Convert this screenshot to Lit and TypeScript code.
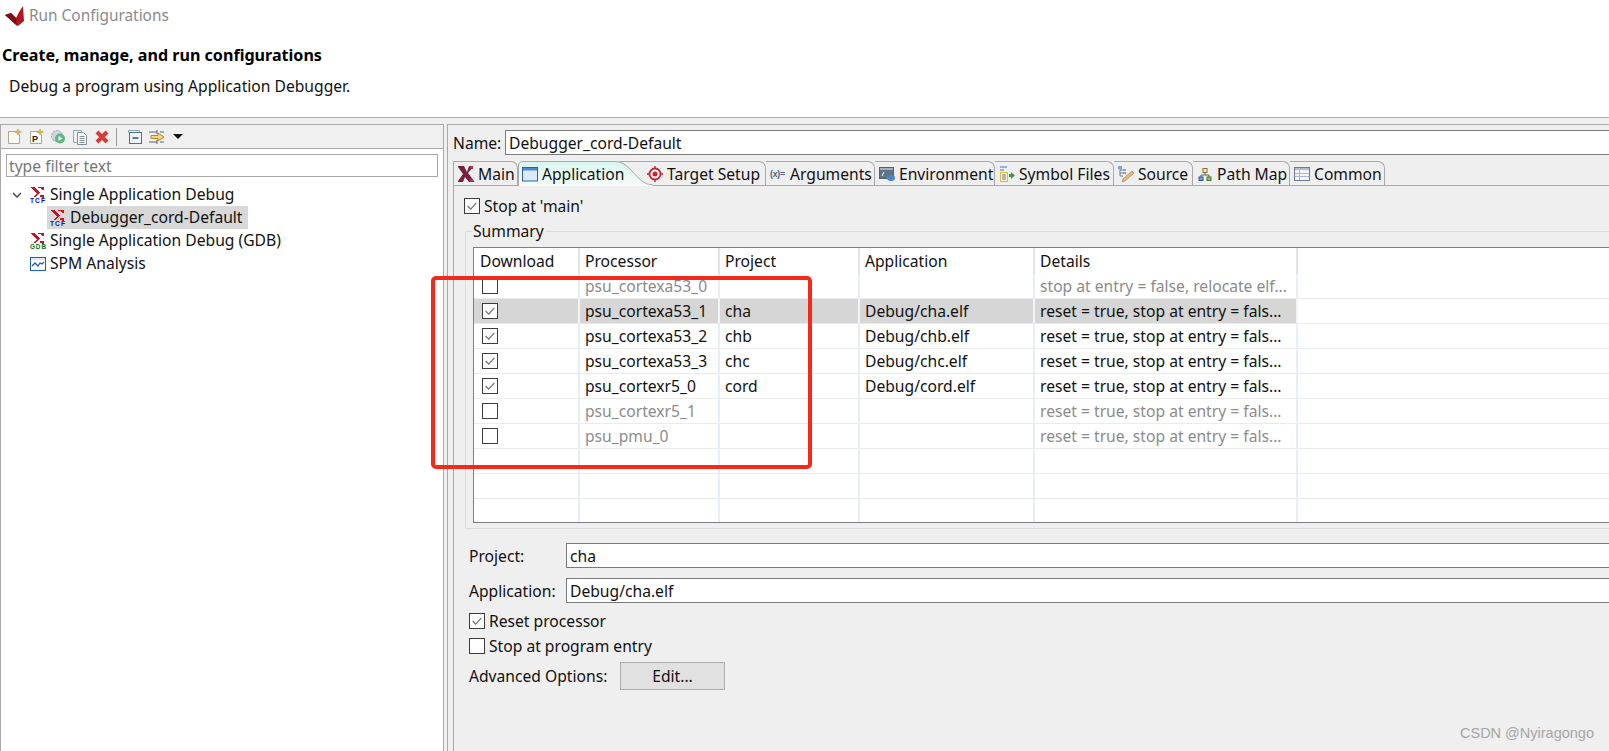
import { LitElement, html, css, svg } from "lit";
import { customElement } from "lit/decorators.js";

const sigma = (c = "#c8141e") => svg`
  <path d="M1 0h4v1h1v1h1v1h1v1h1v1h1v1H9v1H8v1H7v1H6v1H4v-1h1V8h1V7h1V6H6V5H5V4H4V3H3V2H2V1H1z" fill="${c}"/>
  <path d="M8 0h6v3h-2V2h-1V1H8zM10 8h4v3h-2v-1h-2z" fill="${c}"/>`;

const tcf = svg`<svg class="ic" viewBox="0 0 16 16">
  <g>${sigma()}</g>
  <text x="0" y="16" font-family="Liberation Sans" font-weight="700" font-size="6.6" fill="#0a0ad8" textLength="15">TCF</text></svg>`;
const gdb = svg`<svg class="ic" viewBox="0 0 16 16">
  <g>${sigma()}</g>
  <text x="0" y="16" font-family="Liberation Sans" font-weight="700" font-size="6.4" fill="#0b6b14" textLength="16">GDB</text></svg>`;
const spm = svg`<svg class="ic" viewBox="0 0 16 16">
  <rect x=".5" y="1.5" width="15" height="13" fill="#fff" stroke="#1a5fb4"/>
  <rect x="1" y="2" width="14" height="2" fill="#dce8f6"/>
  <path d="M2 10l3-3 3 3 2-3 2 1 2-2" fill="none" stroke="#1a5fb4" stroke-width="1.3"/></svg>`;
const page = svg`<path d="M2.5 2.5h7l4 3v9h-11z" fill="#fbfbf4" stroke="#a9a99a"/>`;
const spark = svg`<path d="M12 0l1 2.2 2.5.8-2.5.8-1 2.2-1-2.2L8.5 3l2.5-.8z" fill="#e6b94a" stroke="#a9812a" stroke-width=".4"/>`;

const toolIcons = [
  svg`<svg class="ic" viewBox="0 0 16 16">${page}${spark}</svg>`,
  svg`<svg class="ic" viewBox="0 0 16 16">${page}${spark}<text x="4" y="13" font-family="Liberation Sans" font-weight="700" font-size="9" fill="#222">P</text></svg>`,
  svg`<svg class="ic" viewBox="0 0 16 16"><circle cx="7" cy="7" r="5.5" fill="#cfd6dc" stroke="#9aa5ae" stroke-dasharray="2 1"/><circle cx="10" cy="9.5" r="5" fill="#5cb67e"/><path d="M8.5 7l4 2.5-4 2.5z" fill="#fff"/></svg>`,
  svg`<svg class="ic" viewBox="0 0 16 16"><path d="M1.5 1.5h8v12h-8z" fill="#eef1f5" stroke="#9aa5b5"/><path d="M5.5 3.5h6l3 3v9h-9z" fill="#fff" stroke="#7f8ea3"/><path d="M7.5 7.5h5M7.5 9.5h5M7.5 11.5h5M7.5 13.5h5" stroke="#7f8ea3"/></svg>`,
  svg`<svg class="ic" viewBox="0 0 16 16"><path d="M3 3l10 10M13 3L3 13" stroke="#d93a3a" stroke-width="4"/></svg>`,
];
const toolIcons2 = [
  svg`<svg class="ic" viewBox="0 0 16 16"><path d="M1.5 3.500v-2h11v2" fill="none" stroke="#8ea4bd"/><rect x="2.500" y="3.500" width="12" height="11" fill="#eef4fb" stroke="#4d6f96"/><path d="M5.500 9h6" stroke="#1d3f66" stroke-width="1.400"/></svg>`,
  svg`<svg class="ic" viewBox="0 0 16 16"><path d="M0 3h8M0 13h8M8 1v4M8 11v4" stroke="#5a6470"/><path d="M11 3h4M11 13h4" stroke="#5a6470"/><path d="M2 6.500h7V4l6 4-6 4V9.500H2z" fill="#f3d68a" stroke="#b8862a"/></svg>`,
];

const tabIcons: Record<string, unknown> = {
  Main: svg`<svg class="ic" viewBox="0 0 16 16"><path d="M0 0h6l3 6 2-6h4v1l-5 6 6 8v1h-5l-4-5-2 5H0v-1l5-7-5-7z" fill="#7a1f3d"/><path d="M11 0h4v3h-2zM11 13h4v3h-3z" fill="#a8324f"/></svg>`,
  Application: svg`<svg class="ic" viewBox="0 0 16 16"><rect x=".5" y="1.500" width="15" height="13.500" fill="#dbe9f8" stroke="#2a62a8"/><rect x="1" y="2" width="14" height="2.500" fill="#4d8ad0"/></svg>`,
  "Target Setup": svg`<svg class="ic" viewBox="0 0 16 16"><circle cx="8" cy="8" r="5.500" fill="#fff" stroke="#d01f2e" stroke-width="1.800"/><circle cx="8" cy="8" r="2.500" fill="#d01f2e"/><path d="M8 0v3M8 13v3M0 8h3M13 8h3" stroke="#d01f2e" stroke-width="1.400"/></svg>`,
  Arguments: svg`<svg class="ic" viewBox="0 0 16 16"><text x="0" y="11" font-family="Liberation Sans" font-weight="700" font-size="8.500" fill="#4a5f85" textLength="15">(x)=</text></svg>`,
  Environment: svg`<svg class="ic" viewBox="0 0 16 16"><rect x=".5" y="1.500" width="14" height="11" fill="#5e7386" stroke="#52606e"/><rect x="1" y="2" width="13" height="2" fill="#9fb0c0"/><path d="M3 10l2-4" stroke="#fff"/><ellipse cx="12" cy="12" rx="4" ry="3" fill="#4d86c6"/></svg>`,
  "Symbol Files": svg`<svg class="ic" viewBox="0 0 16 16"><path d="M1 1h7M1 4h4" stroke="#2f7fc0"/><rect x="1.500" y="6.500" width="7" height="9" fill="#fdf6c8" stroke="#e0b93a"/><path d="M3 9h4M3 11h4M3 13h4" stroke="#5a78b0"/><path d="M10 8h2V6l4 3.500-4 3.500v-2h-2z" fill="#3a9a4a"/></svg>`,
  Source: svg`<svg class="ic" viewBox="0 0 16 16"><path d="M2 1v9M2 4h3M2 7h3M2 10h3" stroke="#6a7f9a"/><rect x="0" y="0" width="4" height="3" fill="#8aa2bf"/><rect x="5" y="3" width="3" height="2" fill="#8aa2bf"/><rect x="5" y="6" width="3" height="2" fill="#8aa2bf"/><path d="M14 5l2 2-9 8-3 1 1-3z" fill="#e8b878" stroke="#a8763a" stroke-width=".600"/></svg>`,
  "Path Map": svg`<svg class="ic" viewBox="0 0 16 16"><rect x="6" y="2.500" width="4" height="4" fill="#f4e9c4" stroke="#8a6a30"/><path d="M8 7v2M4 11V9h8v2" fill="none" stroke="#5a6470"/><rect x="2" y="11" width="4" height="3.500" fill="#7ea0cc" stroke="#35598c"/><rect x="10" y="11" width="4" height="3.500" fill="#8cc06a" stroke="#4a7a30"/></svg>`,
  Common: svg`<svg class="ic" viewBox="0 0 16 16"><rect x=".5" y="1.500" width="15" height="13" fill="#f2f3f7" stroke="#6f7a94"/><rect x="1" y="2" width="14" height="2" fill="#aeb8cf"/><path d="M5.500 4v10M1 7.500h14M1 10.500h14" stroke="#aeb8cf"/></svg>`,
};

const tabs = [
  { n: "Main", w: 64 },
  { n: "Application", w: 135, sel: true },
  { n: "Target Setup", w: 148, pull: true },
  { n: "Arguments", w: 109 },
  { n: "Environment", w: 120 },
  { n: "Symbol Files", w: 119 },
  { n: "Source", w: 79 },
  { n: "Path Map", w: 97 },
  { n: "Common", w: 95 },
];

const R = "reset = true, stop at entry = fals...";
const rows = [
  { on: false, p: "psu_cortexa53_0", d: "stop at entry = false, relocate elf...", dim: true },
  { on: true, p: "psu_cortexa53_1", pr: "cha", a: "Debug/cha.elf", d: R, sel: true },
  { on: true, p: "psu_cortexa53_2", pr: "chb", a: "Debug/chb.elf", d: R },
  { on: true, p: "psu_cortexa53_3", pr: "chc", a: "Debug/chc.elf", d: R },
  { on: true, p: "psu_cortexr5_0", pr: "cord", a: "Debug/cord.elf", d: R },
  { on: false, p: "psu_cortexr5_1", d: R, dim: true },
  { on: false, p: "psu_pmu_0", d: R, dim: true },
];

const box = (on: boolean) => html`<span class="box">${on
  ? svg`<svg viewBox="0 0 16 16" width="14" height="14"><path d="M3 8l3.500 3.500L13 4.500" fill="none" stroke="#6e6e6e" stroke-width="1.300"/></svg>`
  : ""}</span>`;

@customElement("app-root")
export class AppRoot extends LitElement {
  static styles = css`
    :host {
      display: block; position: relative; width: 1609px; height: 751px; overflow: hidden;
      background: #efefef; color: #111;
      font-family: "Noto Sans", "Liberation Sans", sans-serif; font-size: 15.65px;
    }
    .ic { width: 16px; height: 16px; flex: none; display: block; }
    .header { height: 117px; background: #fff; border-bottom: 1px solid #a9a9a9; box-sizing: content-box; }
    .title { display: flex; align-items: center; height: 31px; padding-left: 4px; gap: 4px; color: #8a8a8a; font-size: 15.4px; }
    .title svg { width: 21px; height: 22px; }
    .heading { font-weight: 700; font-size: 16.1px; margin: 9px 0 0 2px; line-height: 31px; color: #000; }
    .sub { margin: 0 0 0 9px; line-height: 30px; }
    .body { display: flex; height: 633px; padding-top: 6px; box-sizing: border-box; }
    .left { width: 444px; flex: none; box-sizing: border-box; border: 1px solid #a9a9a9; border-bottom: 0; background: #fff; }
    .toolbar { display: flex; align-items: center; gap: 6px; height: 23px; padding-left: 5px; background: #f0f0f0; border-bottom: 1px solid #a9a9a9; }
    .sep { width: 1px; height: 18px; background: #999; margin: 0 4px 0 0; }
    .drop { width: 0; height: 0; border: 5px solid transparent; border-top: 5px solid #111; border-bottom: 0; margin-left: 2px; }
    .filter { margin: 5px 5px 0 5px; height: 23px; box-sizing: border-box; border: 1px solid #a9a9a9; padding-left: 2px; line-height: 22px; color: #777; }
    .tree { margin-top: 6px; }
    .node { display: flex; align-items: center; height: 23px; gap: 4px; }
    .node.l1 { padding-left: 29px; }
    .node.l2 { padding-left: 49px; }
    .node .label { line-height: 23px; }
    .node.sel { background: linear-gradient(#d8d8d8, #d8d8d8) 46px 0 / 201px 100% no-repeat; }
    .node.l1.open { padding-left: 11px; }
    .chevron { width: 10px; height: 6px; margin-right: 4px; flex: none; }
    .right { flex: 1; min-width: 0; margin-left: 3px; border-left: 1px solid #a9a9a9; border-top: 1px solid #a9a9a9; padding-top: 5px; }
    .namerow { display: flex; align-items: center; gap: 5px; padding-left: 5px; height: 25px; }
    .namerow > span { width: 47px; flex: none; line-height: 26px; }
    .field { box-sizing: border-box; height: 25px; background: #fff; border: 1px solid #7a7a7a; border-right: 0; flex: 1; padding-left: 3px; line-height: 25px; }
    .folder { margin: 6px 0 0 5px; border-left: 1px solid #a9a9a9; height: 590px; }
    .tabs { display: flex; height: 24px; border-bottom: 1px solid #a9a9a9; box-sizing: content-box; }
    .tab { box-sizing: border-box; height: 24px; display: flex; align-items: center; gap: 4px; padding-left: 4px; flex: none; position: relative; border-top: 1px solid #a9a9a9; border-right: 1px solid #a9a9a9; border-top-right-radius: 7px; white-space: nowrap; line-height: 24px; }
    .tab.sel { border: 0; height: 25px; z-index: 1; padding-left: 4px; gap: 4px; }
    .tab.sel > svg.shape { position: absolute; left: 0; top: 0; width: 135px; height: 25px; }
    .tab.sel > .ic, .tab.sel > span { position: relative; }
    .tab.pull { margin-left: -35px; padding-left: 29px; }
    .panel { padding: 12px 0 0 10px; }
    .check { display: flex; align-items: center; gap: 4px; height: 16px; }
    .box { box-sizing: border-box; width: 16px; height: 16px; flex: none; background: #fff; border: 1px solid #3c3c3c; display: flex; align-items: center; justify-content: center; }
    .group { position: relative; margin: 17px 0 0 1px; height: 298px; border: 1px solid #dcdcdc; border-right: 0; box-sizing: border-box; padding: 15px 0 0 7px; }
    .legend { position: absolute; left: 6px; top: -10px; background: #efefef; padding: 0 1px; line-height: 18px; }
    .table { height: 276px; box-sizing: border-box; border: 1px solid #7f7f7f; border-right: 0; background: #fff; overflow: hidden; }
    .tr { display: grid; grid-template-columns: 106px 140px 140px 175px 263px 1fr; height: 25px; box-sizing: border-box; border-bottom: 1px solid #ebebeb; line-height: 24px; }
    .tr.head { border-bottom: 0; height: 26px; line-height: 26px; }
    .tr > div { border-right: 2px solid #e8eef7; padding-left: 5px; white-space: nowrap; overflow: hidden; }
    .tr.head > div { border-right-color: #e4e4e4; padding-left: 5px; }
    .tr > div:first-child { padding-left: 8px; display: flex; align-items: center; }
    .tr.head > div:first-child { padding-left: 6px; }
    .tr > div:last-child { border-right: 0; }
    .tr.sel > div { background: #d6d6d6; border-right-color: #f4f4f4; }
    .tr.sel > div:nth-child(n+6) { background: transparent; }
    .dim { color: #8c8c8c; }
    .form { padding: 14px 0 0 5px; }
    .frow { display: flex; align-items: center; height: 25px; }
    .frow + .frow { margin-top: 10px; }
    .frow > label { width: 97px; flex: none; line-height: 26px; }
    .form .check { margin-top: 10px; height: 16px; }
    .form .check + .check { margin-top: 9px; }
    .adv { display: flex; align-items: center; margin-top: 8px; }
    .adv label { width: 151px; flex: none; }
    .btn { width: 105px; height: 28px; box-sizing: border-box; background: #e1e1e1; border: 1px solid #adadad; display: flex; align-items: center; justify-content: center; }
    .redbox { position: absolute; left: 431px; top: 276px; width: 381px; height: 193px; box-sizing: border-box; border: 4px solid #f5281c; border-radius: 5px; pointer-events: none; z-index: 5; }
    .mark { position: absolute; right: 15px; top: 723px; color: #a6a6a6; font-family: "Liberation Sans", sans-serif; font-size: 14.5px; line-height: 20px; }
  `;

  render() {
    return html`
      <div class="header">
        <div class="title">
          <svg viewBox="0 0 21 22"><path d="M1 10l6-2 5 5c2-4 4-8 7-12l1 15-6 5z" fill="#b3161e"/><path d="M1 10l6-2 5 5 1 8z" fill="#7d0f14"/></svg>
          <span>Run Configurations</span>
        </div>
        <div class="heading">Create, manage, and run configurations</div>
        <div class="sub">Debug a program using Application Debugger.</div>
      </div>
      <div class="body">
        <div class="left">
          <div class="toolbar">
            ${toolIcons}
            <span class="sep"></span>
            ${toolIcons2}
            <span class="drop"></span>
          </div>
          <div class="filter">type filter text</div>
          <div class="tree">
            <div class="node l1 open">
              <svg class="chevron" viewBox="0 0 10 6"><path d="M1 1l4 4 4-4" fill="none" stroke="#444" stroke-width="1.300"/></svg>
              ${tcf}<span class="label">Single Application Debug</span>
            </div>
            <div class="node l2 sel">${tcf}<span class="label">Debugger_cord-Default</span></div>
            <div class="node l1">${gdb}<span class="label">Single Application Debug (GDB)</span></div>
            <div class="node l1">${spm}<span class="label">SPM Analysis</span></div>
          </div>
        </div>
        <div class="right">
          <div class="namerow"><span>Name:</span><div class="field">Debugger_cord-Default</div></div>
          <div class="folder">
            <div class="tabs">
              ${tabs.map(t => html`
                <div class="tab ${t.sel ? "sel" : ""} ${t.pull ? "pull" : ""}" style="width:${t.w}px">
                  ${t.sel ? svg`<svg class="shape" viewBox="0 0 135 25"><defs><linearGradient id="g" x1="0" y1="0" x2="0" y2="1"><stop offset="0" stop-color="#d8f6ee"/><stop offset="1" stop-color="#f6fcfa"/></linearGradient></defs><path d="M0 25V5Q0 0 5 0H97C114 0 118 24 135 24V25Z" fill="url(#g)"/><path d="M.5 25V5Q.5.500 5 .500H97C114 .500 118 24 135 24" fill="none" stroke="#a9a9a9"/></svg>` : ""}
                  ${tabIcons[t.n]}<span>${t.n}</span>
                </div>`)}
            </div>
            <div class="panel">
              <div class="check">${box(true)}<span>Stop at 'main'</span></div>
              <div class="group">
                <span class="legend">Summary</span>
                <div class="table">
                  <div class="tr head"><div>Download</div><div>Processor</div><div>Project</div><div>Application</div><div>Details</div><div></div></div>
                  ${rows.map(r => html`
                    <div class="tr ${r.sel ? "sel" : ""} ${r.dim ? "dim" : ""}">
                      <div>${box(r.on)}</div><div>${r.p}</div><div>${r.pr ?? ""}</div><div>${r.a ?? ""}</div><div>${r.d}</div><div></div>
                    </div>`)}
                  ${[0, 1, 2].map(() => html`<div class="tr"><div></div><div></div><div></div><div></div><div></div><div></div></div>`)}
                </div>
              </div>
              <div class="form">
                <div class="frow"><label>Project:</label><div class="field">cha</div></div>
                <div class="frow"><label>Application:</label><div class="field">Debug/cha.elf</div></div>
                <div class="check">${box(true)}<span>Reset processor</span></div>
                <div class="check">${box(false)}<span>Stop at program entry</span></div>
                <div class="adv"><label>Advanced Options:</label><div class="btn">Edit...</div></div>
              </div>
            </div>
          </div>
        </div>
      </div>
      <div class="redbox"></div>
      <div class="mark">CSDN @Nyiragongo</div>
    `;
  }
}
